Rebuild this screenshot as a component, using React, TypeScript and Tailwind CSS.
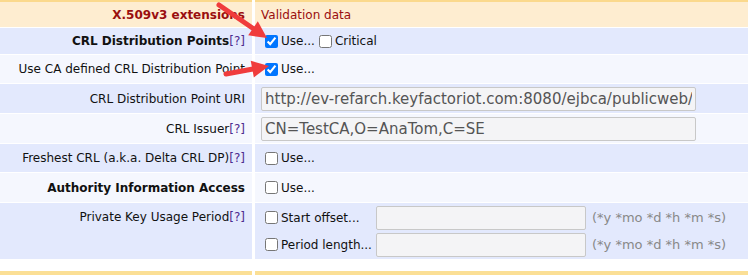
import React from 'react';

const font = "font-['DejaVu_Sans',Verdana,sans-serif]";

function Help() {
  return <span className="font-normal text-[#4c2a8f]">[?]</span>;
}

function Check({ label, checked }: { label: string; checked?: boolean }) {
  return (
    <label className="flex items-center text-[12px] text-[#111]">
      <input
        type="checkbox"
        defaultChecked={checked}
        className="m-0 ml-[4px] mr-[3px] w-[13px] h-[13px] accent-[#0075ff]"
      />
      {label}
    </label>
  );
}

function Arrow({ x1, y1, x2, y2 }: { x1: number; y1: number; x2: number; y2: number }) {
  const a = Math.atan2(y2 - y1, x2 - x1);
  const len = 17;
  const w = 8.5;
  const bx = x2 - len * Math.cos(a);
  const by = y2 - len * Math.sin(a);
  const p1 = `${bx + w * Math.sin(a)},${by - w * Math.cos(a)}`;
  const p2 = `${bx - w * Math.sin(a)},${by + w * Math.cos(a)}`;
  return (
    <>
      <line x1={x1} y1={y1} x2={bx + 2 * Math.cos(a)} y2={by + 2 * Math.sin(a)} stroke="#f03c3c" strokeWidth={5} strokeLinecap="round" />
      <polygon points={`${x2},${y2} ${p1} ${p2}`} fill="#f03c3c" />
    </>
  );
}

export default function App() {
  const input =
    "h-[24px] border border-[#c8c8c8] rounded-[2px] bg-[#f4f4f6] px-[3px] text-[15px] text-[#555] leading-none outline-none";
  return (
    <div className={`relative w-[748px] h-[275px] overflow-hidden bg-white ${font}`}>
      <div className="grid grid-cols-[252px_1fr] gap-x-[3px] gap-y-px">
        {/* header */}
        <div className="h-[27px] bg-[#feedd0] border-t-2 border-[#fbd98c] flex items-center justify-end pr-[7px] text-[12px] font-bold text-[#9a0f0f]">
          X.509v3 extensions
        </div>
        <div className="h-[27px] bg-[#feedd0] border-t-2 border-[#fbd98c] flex items-center pl-[6px] text-[12px] text-[#9a0f0f]">
          Validation data
        </div>

        {/* CRL DP */}
        <div className="h-[26px] bg-[#e3e9fd] flex items-center justify-end pr-[7px] text-[12px] font-bold text-[#111]">
          CRL Distribution Points<Help />
        </div>
        <div className="h-[26px] bg-[#e3e9fd] flex items-center pl-[6px]">
          <Check label="Use..." checked />
          <Check label="Critical" />
        </div>

        {/* use CA defined */}
        <div className="h-[28px] bg-[#f5f7fe] flex items-center justify-end pr-[7px] text-[12px] text-[#111] whitespace-nowrap overflow-hidden">
          Use CA defined CRL Distribution Point
        </div>
        <div className="h-[28px] bg-[#f5f7fe] flex items-center pl-[6px]">
          <Check label="Use..." checked />
        </div>

        {/* URI */}
        <div className="h-[29px] bg-[#e3e9fd] flex items-center justify-end pr-[7px] text-[12px] text-[#111]">
          CRL Distribution Point URI
        </div>
        <div className="h-[29px] bg-[#e3e9fd] flex items-center pl-[6px]">
          <input
            className={`${input} w-[435px]`}
            defaultValue="http://ev-refarch.keyfactoriot.com:8080/ejbca/publicweb/webdist/certdist?cmd=crl"
          />
        </div>

        {/* issuer */}
        <div className="h-[29px] bg-[#f5f7fe] flex items-center justify-end pr-[7px] text-[12px] text-[#111]">
          CRL Issuer<Help />
        </div>
        <div className="h-[29px] bg-[#f5f7fe] flex items-center pl-[6px]">
          <input className={`${input} w-[435px]`} defaultValue="CN=TestCA,O=AnaTom,C=SE" />
        </div>

        {/* freshest */}
        <div className="h-[28px] bg-[#e3e9fd] flex items-center justify-end pr-[7px] text-[12px] text-[#111]">
          Freshest CRL (a.k.a. Delta CRL DP)<Help />
        </div>
        <div className="h-[28px] bg-[#e3e9fd] flex items-center pl-[6px]">
          <Check label="Use..." />
        </div>

        {/* AIA */}
        <div className="h-[29px] bg-[#f5f7fe] flex items-center justify-end pr-[7px] text-[12px] font-bold text-[#111]">
          Authority Information Access
        </div>
        <div className="h-[29px] bg-[#f5f7fe] flex items-center pl-[6px]">
          <Check label="Use..." />
        </div>

        {/* private key usage period */}
        <div className="h-[56px] bg-[#e3e9fd] flex justify-end pr-[7px] pt-[5px] text-[12px] text-[#111]">
          Private Key Usage Period<Help />
        </div>
        <div className="h-[56px] bg-[#e3e9fd] flex flex-col justify-center gap-[3px] pl-[6px]">
          {['Start offset...', 'Period length...'].map((l) => (
            <div key={l} className="flex items-center">
              <div className="w-[115px]">
                <Check label={l} />
              </div>
              <input className={`${input} w-[210px] h-[23px]`} />
              <span className="ml-[6px] text-[13px] text-[#888]">(*y *mo *d *h *m *s)</span>
            </div>
          ))}
        </div>
      </div>

      <div className="grid grid-cols-[252px_1fr] gap-x-[3px] mt-[12px]">
        <div className="h-[10px] bg-[#fbdf95]" />
        <div className="h-[10px] bg-[#fbdf95]" />
      </div>

      <svg className="absolute inset-0 pointer-events-none" width={748} height={275}>
        <Arrow x1={219} y1={5} x2={267} y2={38} />
        <Arrow x1={226} y1={74} x2={269} y2={66} />
      </svg>
    </div>
  );
}
